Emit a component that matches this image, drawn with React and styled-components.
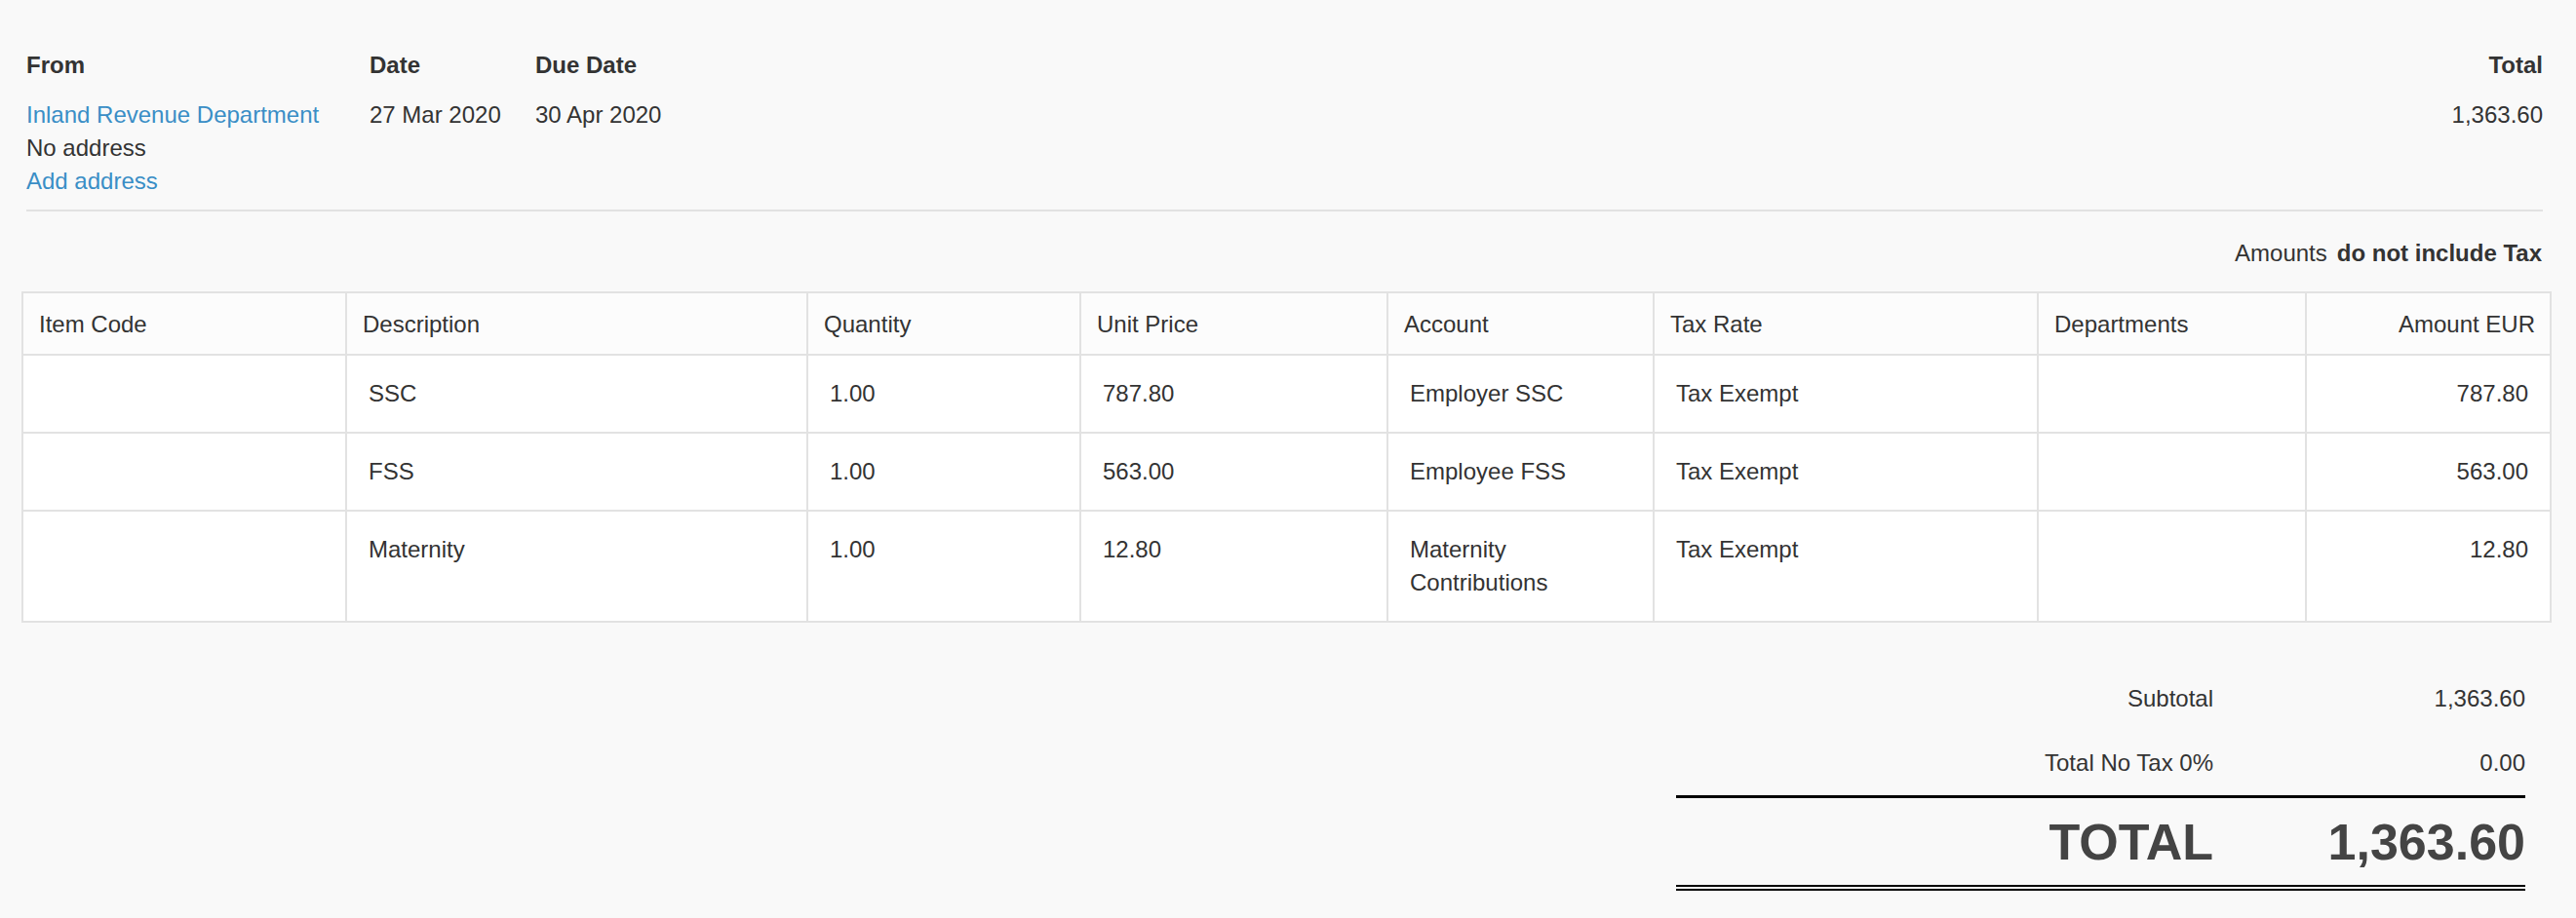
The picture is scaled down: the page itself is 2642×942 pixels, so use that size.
import React from "react";
import styled, { createGlobalStyle } from "styled-components";

const Global = createGlobalStyle`
  body { margin: 0; background: #f9f9f9; font-family: "Liberation Sans", Arial, sans-serif; color: #333; }
`;
const Page = styled.div`
  padding: 50px 34px 0 22px;
  font-size: 24px;
  line-height: 34px;
`;
const Head = styled.div`
  display: flex;
  padding-left: 5px;
`;
const HCol = styled.div`
  width: ${(p) => p.w || "auto"};
  flex: ${(p) => (p.grow ? 1 : "none")};
  text-align: ${(p) => (p.right ? "right" : "left")};
`;
const Label = styled.div`
  font-weight: bold;
  margin-bottom: 17px;
`;
const Link = styled.div`
  color: #3a8ec6;
`;
const Divider = styled.div`
  margin: 12px 0 0 5px;
  border-top: 2px solid #e2e2e2;
`;
const Amounts = styled.div`
  text-align: right;
  margin: 26px 1px 22px 0;
  b { margin-left: 10px; }
`;
const Table = styled.div`
  display: grid;
  grid-template-columns: 332px 473px 280px 315px 273px 394px 275px 1fr;
  background: #fff;
  border-top: 2px solid #e2e2e2;
  border-left: 2px solid #e2e2e2;
  margin-right: -9px;
`;
const Cell = styled.div`
  border-right: 2px solid #e2e2e2;
  border-bottom: 2px solid #e2e2e2;
  padding: ${(p) => (p.head ? "15px 16px 13px" : "22px 22px 22px")};
  padding-left: ${(p) => (p.head ? "16px" : "22px")};
  min-height: ${(p) => (p.head ? "0" : "79px")};
  box-sizing: border-box;
  text-align: ${(p) => (p.right ? "right" : "left")};
  ${(p) => p.right && !p.head && "padding-right: 22px;"}
  ${(p) => p.right && p.head && "padding-right: 15px;"}
  background: ${(p) => (p.head ? "#fcfcfc" : "#fff")};
`;
const Totals = styled.div`
  margin: 45px 18px 0 auto;
  width: 871px;
`;
const TRow = styled.div`
  display: grid;
  grid-template-columns: 551px 1fr;
  height: 66px;
  align-items: center;
  text-align: right;
  border-top: ${(p) => (p.line ? "3px solid #000" : "none")};
`;
const Big = styled(TRow)`
  font-size: 52px;
  font-weight: bold;
  height: 98px;
  color: #444;
  border-bottom: 6px double #000;
  box-sizing: border-box;
`;

const cols = ["Item Code", "Description", "Quantity", "Unit Price", "Account", "Tax Rate", "Departments", "Amount EUR"];
const rows = [
  ["", "SSC", "1.00", "787.80", "Employer SSC", "Tax Exempt", "", "787.80"],
  ["", "FSS", "1.00", "563.00", "Employee FSS", "Tax Exempt", "", "563.00"],
  ["", "Maternity", "1.00", "12.80", "Maternity\nContributions", "Tax Exempt", "", "12.80"],
];

export default function App() {
  return (
    <Page>
      <Global />
      <Head>
        <HCol w="352px">
          <Label>From</Label>
          <Link>Inland Revenue Department</Link>
          <div>No address</div>
          <Link>Add address</Link>
        </HCol>
        <HCol w="170px"><Label>Date</Label><div>27 Mar 2020</div></HCol>
        <HCol grow><Label>Due Date</Label><div>30 Apr 2020</div></HCol>
        <HCol right><Label>Total</Label><div>1,363.60</div></HCol>
      </Head>
      <Divider />
      <Amounts>Amounts<b>do not include Tax</b></Amounts>
      <Table>
        {cols.map((c, i) => <Cell head key={c} right={i === 7}>{c}</Cell>)}
        {rows.map((r, ri) => r.map((v, i) => (
          <Cell key={ri + "-" + i} right={i === 7} style={{ whiteSpace: "pre-line" }}>{v}</Cell>
        )))}
      </Table>
      <Totals>
        <TRow><span>Subtotal</span><span>1,363.60</span></TRow>
        <TRow><span>Total No Tax 0%</span><span>0.00</span></TRow>
        <Big line><span>TOTAL</span><span>1,363.60</span></Big>
      </Totals>
    </Page>
  );
}
